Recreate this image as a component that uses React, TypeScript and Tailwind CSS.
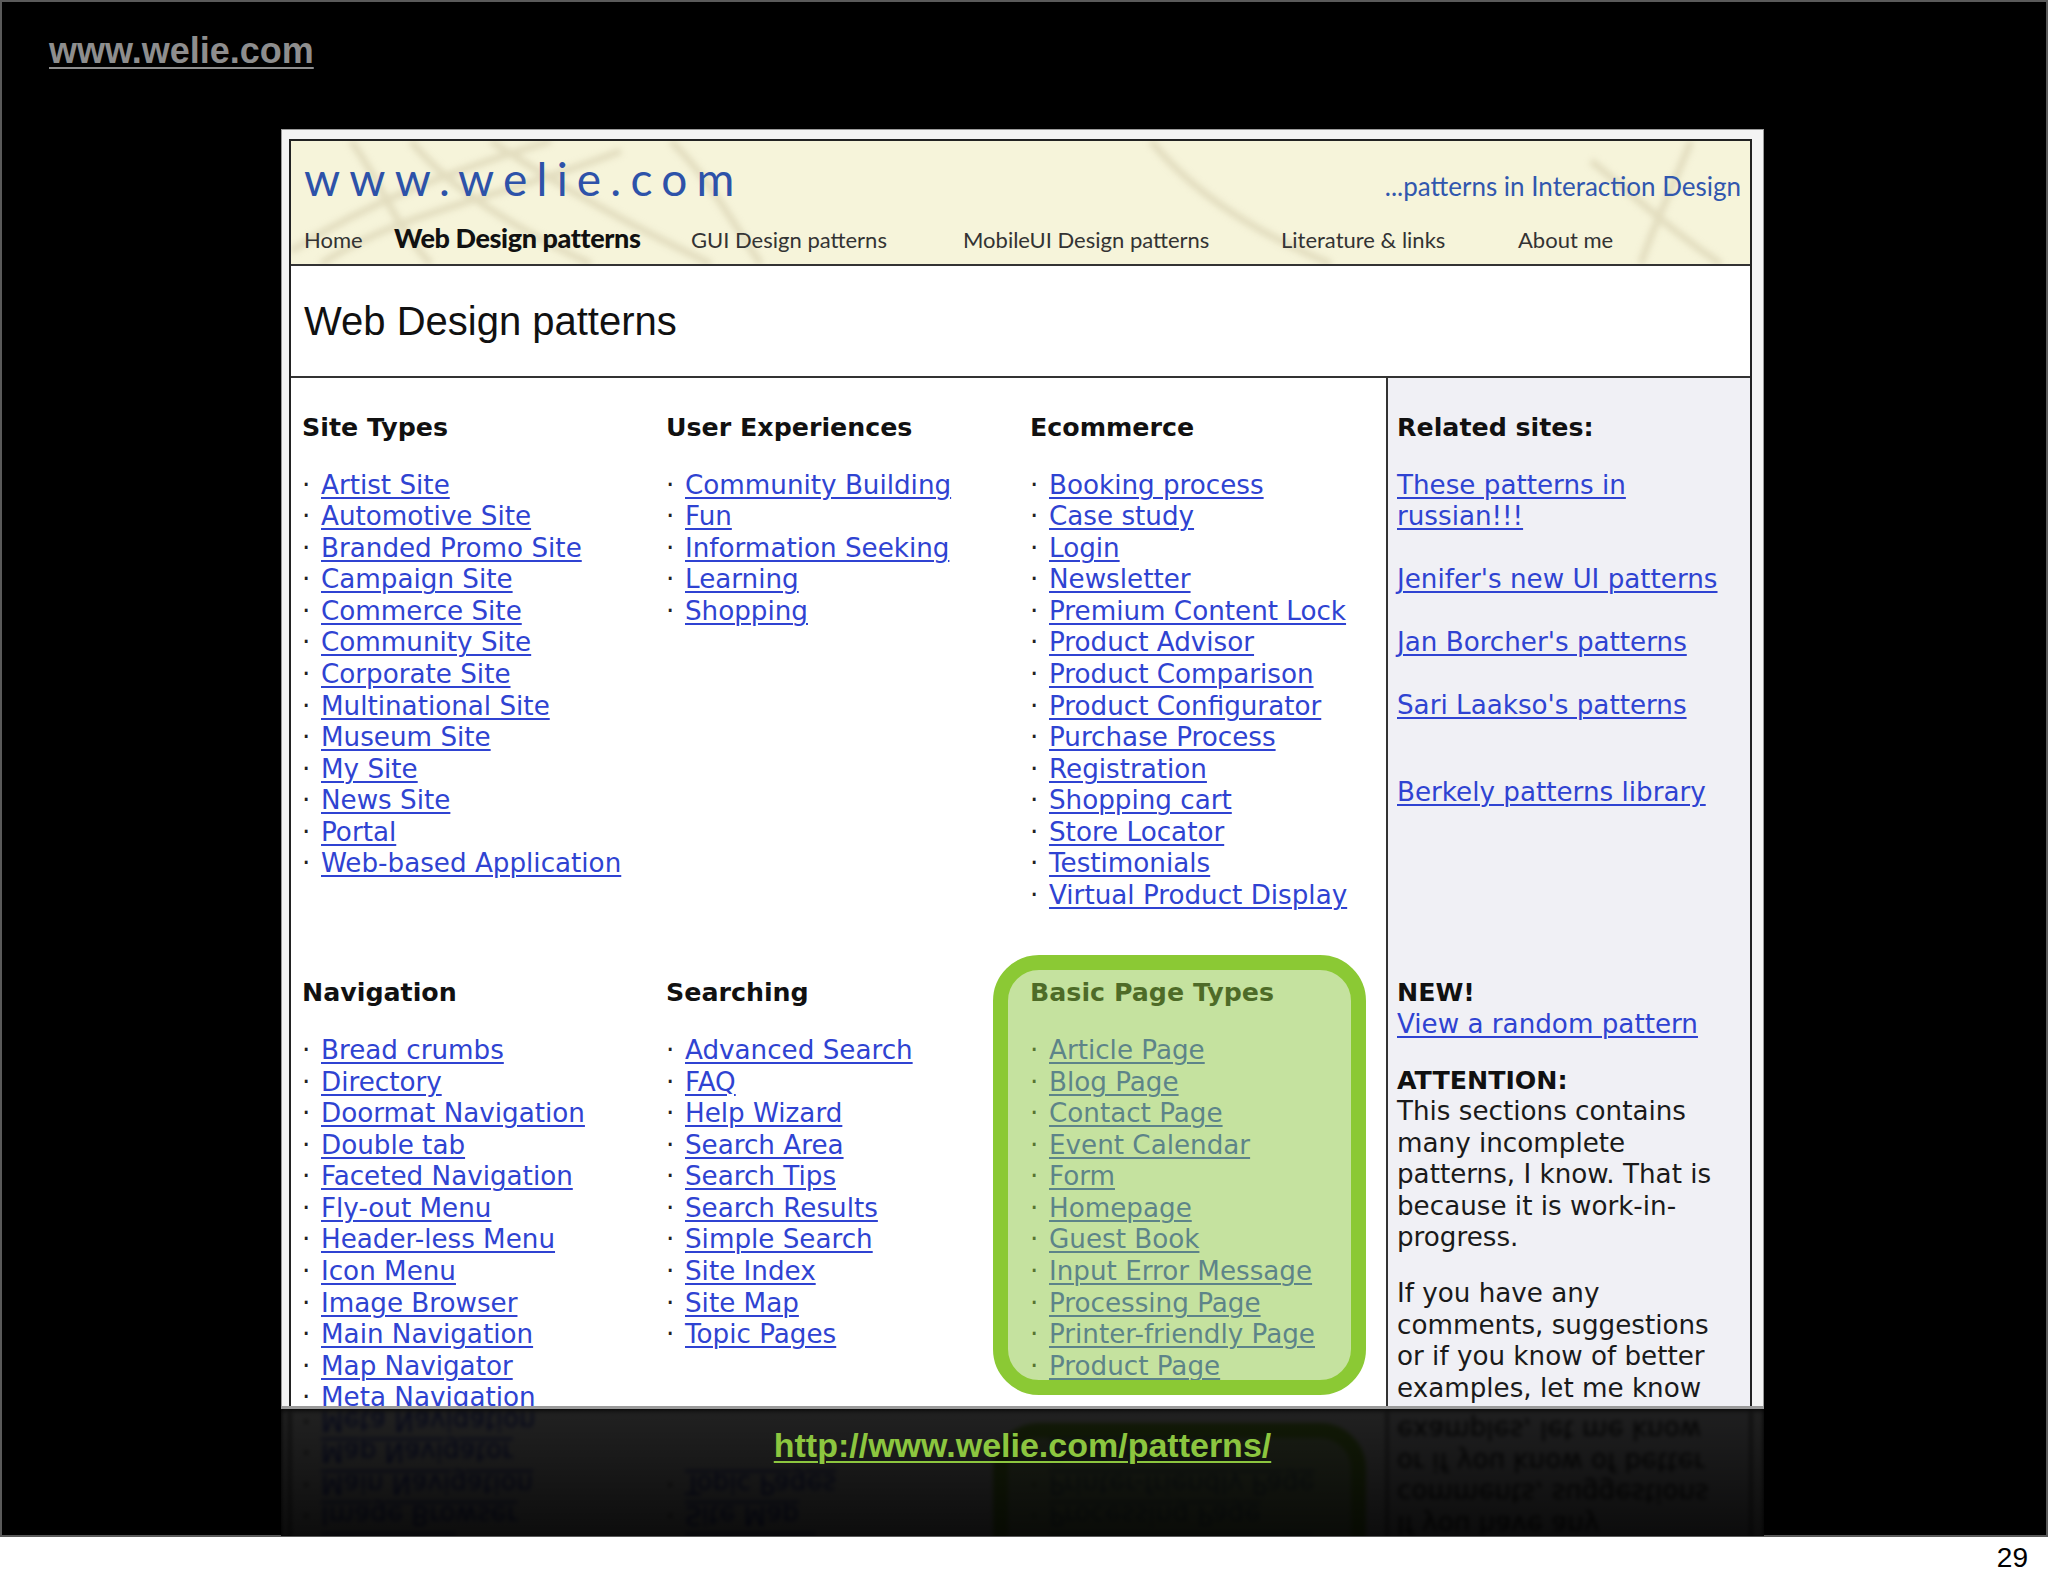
import React from 'react';

const siteTypes = ['Artist Site', 'Automotive Site', 'Branded Promo Site', 'Campaign Site', 'Commerce Site', 'Community Site', 'Corporate Site', 'Multinational Site', 'Museum Site', 'My Site', 'News Site', 'Portal', 'Web-based Application'];
const userExperiences = ['Community Building', 'Fun', 'Information Seeking', 'Learning', 'Shopping'];
const ecommerce = ['Booking process', 'Case study', 'Login', 'Newsletter', 'Premium Content Lock', 'Product Advisor', 'Product Comparison', 'Product Configurator', 'Purchase Process', 'Registration', 'Shopping cart', 'Store Locator', 'Testimonials', 'Virtual Product Display'];
const navigation = ['Bread crumbs', 'Directory', 'Doormat Navigation', 'Double tab', 'Faceted Navigation', 'Fly-out Menu', 'Header-less Menu', 'Icon Menu', 'Image Browser', 'Main Navigation', 'Map Navigator', 'Meta Navigation'];
const searching = ['Advanced Search', 'FAQ', 'Help Wizard', 'Search Area', 'Search Tips', 'Search Results', 'Simple Search', 'Site Index', 'Site Map', 'Topic Pages'];
const basicPages = ['Article Page', 'Blog Page', 'Contact Page', 'Event Calendar', 'Form', 'Homepage', 'Guest Book', 'Input Error Message', 'Processing Page', 'Printer-friendly Page', 'Product Page'];

const navItems = [
  { label: 'Home', w: 'w-[90px]' },
  { label: 'Web Design patterns', w: 'w-[297px]', active: true },
  { label: 'GUI Design patterns', w: 'w-[272px]' },
  { label: 'MobileUI Design patterns', w: 'w-[318px]' },
  { label: 'Literature & links', w: 'w-[237px]' },
  { label: 'About me', w: 'w-[120px]' },
];

const link = 'text-[#2f43d2] underline decoration-2 underline-offset-[3px]';

function Section({ title, items }: { title: string; items: string[] }) {
  return (
    <div>
      <h3 className="text-[25.3px] font-bold leading-[31.56px] text-[#111]">{title}</h3>
      <ul className="mt-[26px]">
        {items.map((item) => (
          <li key={item} className="flex whitespace-nowrap text-[26.2px] leading-[31.56px]">
            <span className="w-[19px] shrink-0 text-[#222]">·</span>
            <a href="#" className={link}>{item}</a>
          </li>
        ))}
      </ul>
    </div>
  );
}

function HeaderTexture() {
  // faint beige net drawn across the banner
  return (
    <svg className="pointer-events-none absolute inset-0 h-full w-full" viewBox="0 0 1459 123" preserveAspectRatio="none">
      <defs>
        <filter id="soft">
          <feGaussianBlur stdDeviation="3" />
        </filter>
      </defs>
      <g fill="none" stroke="#cfc6a4" strokeWidth="7" opacity="0.5" filter="url(#soft)">
        <path d="M0 110 C 80 60, 160 30, 260 0" />
        <path d="M30 123 C 110 70, 200 60, 330 10" />
        <path d="M120 0 C 160 50, 230 90, 300 123" />
        <path d="M200 0 C 260 40, 330 80, 420 123" />
        <path d="M380 0 C 420 40, 440 80, 470 123" />
        <path d="M60 0 C 90 40, 100 80, 140 123" />
        <path d="M860 0 C 900 50, 960 90, 1040 123" />
        <path d="M1300 20 C 1350 60, 1380 90, 1430 123" />
        <path d="M1400 0 C 1380 50, 1360 90, 1350 123" />
      </g>
    </svg>
  );
}

function Page() {
  return (
    <div className="h-full border-2 border-b-0 border-[#222] bg-white font-['DejaVu_Sans',Verdana,sans-serif]">
      {/* banner */}
      <div className="relative h-[125px] border-b-2 border-[#333] bg-[#f6f4da] pl-[13px] pr-[9px] font-['Lato',sans-serif]">
        <HeaderTexture />
        <div className="relative flex items-baseline justify-between pt-[15px]">
          <div className="text-[46px] leading-none tracking-[0.2em] text-[#2d52a9]">www.welie.com</div>
          <div className="text-[26px] leading-none text-[#3157ae]">...patterns in Interaction Design</div>
        </div>
        <div className="relative mt-[22px] flex items-baseline text-[22px] leading-none text-[#333]">
          {navItems.map((n) => (
            <span key={n.label} className={`${n.w} whitespace-nowrap ${n.active ? 'text-[27px] font-black tracking-[-0.015em] text-[#111]' : ''}`}>{n.label}</span>
          ))}
        </div>
      </div>

      {/* title */}
      <div className="flex h-[112px] items-center border-b-2 border-[#333] pl-[13px]">
        <h1 className="font-['Liberation_Sans',Arial,sans-serif] text-[40px] leading-none text-[#111]">Web Design patterns</h1>
      </div>

      {/* pattern index */}
      <div className="grid grid-cols-[375px_364px_356px_1fr]">
        <div className="pl-[11px] pt-[34px] pb-[66px]"><Section title="Site Types" items={siteTypes} /></div>
        <div className="pt-[34px] pb-[66px]"><Section title="User Experiences" items={userExperiences} /></div>
        <div className="pt-[34px] pb-[66px]"><Section title="Ecommerce" items={ecommerce} /></div>
        <div className="border-l-2 border-[#333] bg-[#f0f0f5] pl-[9px] pt-[34px] text-[26.2px] leading-[31.56px]">
          <h3 className="text-[25.3px] font-bold text-[#111]">Related sites:</h3>
          <div className="mt-[26px] flex flex-col items-start gap-[31.56px] whitespace-nowrap">
            <a href="#" className={link}>These patterns in<br />russian!!!</a>
            <a href="#" className={link}>Jenifer's new UI patterns</a>
            <a href="#" className={link}>Jan Borcher's patterns</a>
            <a href="#" className={link}>Sari Laakso's patterns</a>
            <a href="#" className={`mt-[23px] ${link}`}>Berkely patterns library</a>
          </div>
        </div>

        <div className="pl-[11px]"><Section title="Navigation" items={navigation} /></div>
        <div><Section title="Searching" items={searching} /></div>
        <div className="relative">
          <Section title="Basic Page Types" items={basicPages} />
          <div className="absolute -left-[37px] -top-[22px] h-[440px] w-[373px] rounded-[46px] border-[15px] border-[#8bc934] bg-[#8cc63f]/50" />
        </div>
        <div className="border-l-2 border-[#333] bg-[#f0f0f5] pb-[60px] pl-[9px] text-[26.2px] leading-[31.56px] text-[#1a1a1a] whitespace-nowrap">
          <div className="text-[25.3px] font-bold text-[#111]">NEW!</div>
          <a href="#" className={link}>View a random pattern</a>
          <div className="mt-[24px] text-[25.3px] font-bold text-[#111]">ATTENTION:</div>
          <p>This sections contains<br />many incomplete<br />patterns, I know. That is<br />because it is work-in-<br />progress.</p>
          <p className="mt-[24px]">If you have any<br />comments, suggestions<br />or if you know of better<br />examples, let me know<br />and I will add them.</p>
        </div>
      </div>
    </div>
  );
}

function Frame() {
  return (
    <div className="h-[1280px] w-[1483px] overflow-hidden border-x border-t border-b-[3px] border-[#9a9a9a] bg-[#f4f4f4] pl-[7px] pr-[11px] pt-[9px]">
      <Page />
    </div>
  );
}

export default function App() {
  return (
    <div className="h-[1587px] w-[2048px] bg-white font-['Liberation_Sans',Arial,sans-serif]">
      <div className="h-[1537px] border-2 border-[#5a5a5a] bg-black pl-[47px] pt-[31px]">
        <a href="#" className="block w-fit text-[36px] font-bold leading-none text-[#8e8e8e] underline decoration-2 underline-offset-[4px]">www.welie.com</a>

        <div className="ml-[232px] mt-[60px]">
          <Frame />
          {/* mirrored reflection under the screenshot */}
          <div className="relative h-[127px] w-[1483px] overflow-hidden">
            <div className="-scale-y-100 blur-[2px]">
              <Frame />
            </div>
            <div className="absolute inset-0 bg-gradient-to-b from-black/[0.87] to-black/[0.95]" />
            <div className="absolute inset-x-0 top-[19px] text-center">
              <a href="#" className="text-[34px] font-bold leading-none text-[#8cc63f] underline decoration-2 underline-offset-[4px]">http://www.welie.com/patterns/</a>
            </div>
          </div>
        </div>
      </div>
      <div className="flex justify-end pr-[20px] pt-[7px] text-[28px] leading-none text-black">29</div>
    </div>
  );
}
